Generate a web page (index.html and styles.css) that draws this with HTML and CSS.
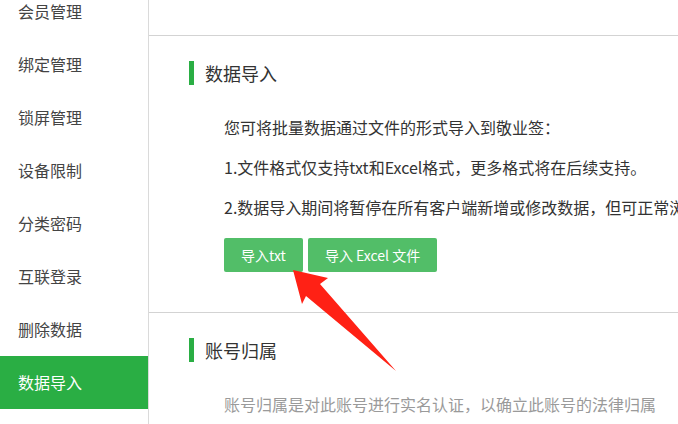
FILE: index.html
```html
<!DOCTYPE html>
<html lang="zh-CN">
<head>
    <meta charset="UTF-8">
    <meta name="viewport" content="width=device-width, initial-scale=1.0">
    <title>数据导入</title>
    <link rel="stylesheet" href="styles.css">
</head>
<body>
    <div class="page">
        <ul class="sidebar">
            <li>会员管理</li>
            <li>绑定管理</li>
            <li>锁屏管理</li>
            <li>设备限制</li>
            <li>分类密码</li>
            <li>互联登录</li>
            <li>删除数据</li>
            <li class="active">数据导入</li>
        </ul>
        <div class="main">
            <div class="prev"></div>
            <div class="section">
                <h2 class="section-title">数据导入</h2>
                <div class="section-body">
                    <p>您可将批量数据通过文件的形式导入到敬业签：</p>
                    <p>1.文件格式仅支持txt和Excel格式，更多格式将在后续支持。</p>
                    <p>2.数据导入期间将暂停在所有客户端新增或修改数据，但可正常浏览数据，导入完成后即可恢复。</p>
                    <div class="actions">
                        <button class="btn">导入txt</button>
                        <button class="btn">导入 Excel 文件</button>
                    </div>
                </div>
            </div>
            <div class="section">
                <h2 class="section-title">账号归属</h2>
                <div class="section-body">
                    <p class="muted">账号归属是对此账号进行实名认证，以确立此账号的法律归属</p>
                </div>
            </div>
        </div>
    </div>
    <!-- 标注箭头 -->
    <svg class="arrow" width="678" height="424" viewBox="0 0 678 424">
        <polygon points="293,270 328,278 320,284 396,371 306,296 302,304" fill="#ff2115"/>
    </svg>
</body>
</html>
```

FILE: styles.css
```css
/* 全局 */
body {
    margin: 0;
    font-family: "Noto Sans CJK SC", "Noto Sans", sans-serif;
    color: #333;
    background: #fff;
    overflow: hidden;
}

.page {
    display: flex;
    height: 424px;
    overflow: hidden;
}

/* 左侧菜单 */
.sidebar {
    list-style: none;
    margin: -15px 0 0 0;
    padding: 0;
    width: 148px;
    flex-shrink: 0;
    border-right: 1px solid #dadada;
}

.sidebar li {
    height: 53px;
    line-height: 53px;
    padding-left: 18px;
    font-size: 16px;
    color: #444;
}

.sidebar li.active {
    background: #2aae44;
    color: #fff;
}

/* 主内容 */
.main {
    flex: 1;
    min-width: 0;
    white-space: nowrap;
    overflow: hidden;
}

.prev {
    height: 35px;
}

.section {
    border-top: 1px solid #d3d3d3;
    padding: 25px 0 40px 40px;
}

.section-title {
    margin: 0;
    height: 24px;
    line-height: 24px;
    border-left: 5px solid #2aae44;
    padding-left: 11px;
    font-size: 18px;
    font-weight: normal;
    color: #333;
}

.section-body {
    padding-left: 35px;
    margin-top: 22px;
}

.section-body p {
    margin: 0;
    line-height: 40px;
    font-size: 16px;
}

.section-body p.muted {
    color: #9a9a9a;
}

/* 按钮 */
.actions {
    display: flex;
    gap: 5px;
    margin-top: 11px;
}

.btn {
    height: 34px;
    padding: 0 17px;
    border: none;
    border-radius: 2px;
    background: #52be68;
    color: #fff;
    font-family: inherit;
    font-size: 14px;
    cursor: pointer;
}

.btn:hover {
    background: #45b15b;
}

/* 箭头 */
.arrow {
    position: absolute;
    left: 0;
    top: 0;
    pointer-events: none;
}
```
